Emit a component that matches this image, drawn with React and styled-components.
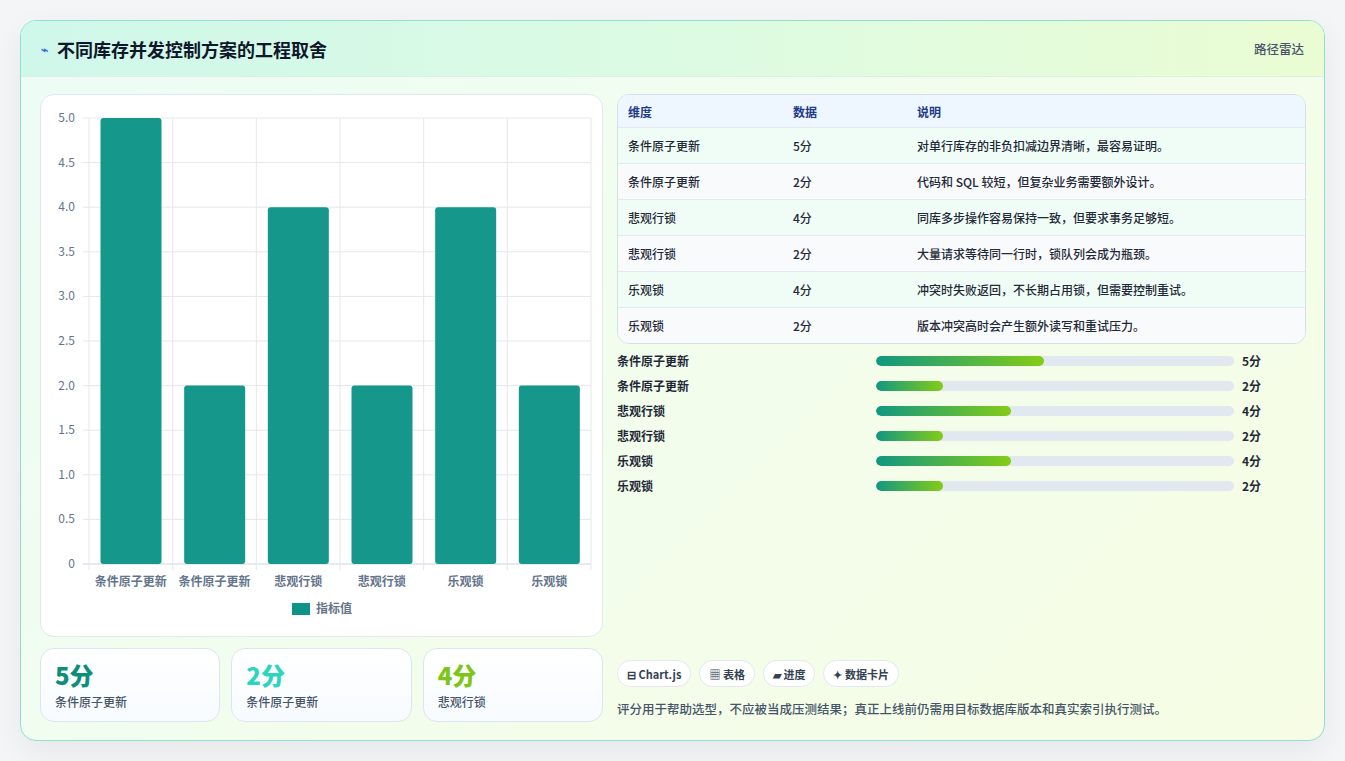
import React from "react";
import styled, { createGlobalStyle } from "styled-components";

const G = createGlobalStyle`
  body{margin:0;background:#f4f5f7;font-family:"Noto Sans CJK SC","Noto Sans",sans-serif;}
`;
const Page = styled.div`padding:20px;height:761px;box-sizing:border-box;`;
const Card = styled.div`
  width:1305px;height:721px;box-sizing:border-box;border:1px solid #8fe0cf;border-radius:16px;overflow:hidden;
  background:linear-gradient(135deg,#ecfdf7 0%,#f3fdea 60%,#f6fde4 100%);
  box-shadow:0 10px 30px rgba(0,0,0,0.06);display:flex;flex-direction:column;`;
const Header = styled.div`
  height:55px;flex:none;display:flex;align-items:center;justify-content:space-between;padding:0 20px;
  background:linear-gradient(90deg,#cff7ea 0%,#dcfbe3 50%,#eafcd3 100%);border-bottom:1px solid #dbeee6;`;
const Title = styled.h1`margin:0;font-size:18px;font-weight:700;color:#0f172a;display:flex;align-items:center;gap:9px;`;
const Spark = styled.span`color:#3b6fe0;font-size:12px;`;
const Tag = styled.span`font-size:12.5px;color:#475569;font-weight:500;`;
const Body = styled.div`flex:1;display:grid;grid-template-columns:563px 689px;gap:14px;padding:17px 19px 18px 19px;`;
const Col = styled.div`display:flex;flex-direction:column;gap:11px;`;
const ChartBox = styled.div`height:543px;background:#fff;border:1px solid #e2e8f0;border-radius:14px;box-sizing:border-box;`;
const Stats = styled.div`display:grid;grid-template-columns:repeat(3,1fr);gap:11px;`;
const Stat = styled.div`height:74px;box-sizing:border-box;border:1px solid #dbe7f0;border-radius:14px;background:linear-gradient(180deg,#fff,#f7fbff);padding:10px 14px;`;
const StatV = styled.div`font-size:24px;font-weight:800;color:${p=>p.c};line-height:32px;`;
const StatL = styled.div`font-size:12px;color:#475569;font-weight:500;margin-top:2px;`;
const Table = styled.div`border:1px solid #d5e0ea;border-radius:12px;overflow:hidden;background:#fff;`;
const Row = styled.div`display:grid;grid-template-columns:165px 124px 1fr;height:${p=>p.h}px;align-items:center;padding:0 10px;
  background:${p=>p.bg};border-top:${p=>p.first?"none":"1px solid #e3e9ef"};font-size:12px;font-weight:${p=>p.head?700:500};color:${p=>p.head?"#1e3a8a":"#1f2937"};`;
const Bars = styled.div`display:flex;flex-direction:column;gap:9px;margin-top:8px;`;
const BarRow = styled.div`display:grid;grid-template-columns:259px 358px 1fr;align-items:center;column-gap:0;height:16px;font-size:12px;font-weight:600;color:#1f2937;`;
const Track = styled.div`height:10px;border-radius:5px;background:#e2e8f0;overflow:hidden;`;
const Fill = styled.div`height:100%;border-radius:5px;background:linear-gradient(90deg,#119781,#84cc16);`;
const Val = styled.span`padding-left:8px;font-weight:700;`;
const Spacer = styled.div`flex:1;`;
const Chips = styled.div`display:flex;gap:8px;`;
const Chip = styled.span`height:27px;box-sizing:border-box;padding:0 9px;border:1px solid #e2e8f0;border-radius:14px;background:#fff;display:flex;align-items:center;gap:4px;font-size:11px;font-weight:700;color:#334155;`;
const Note = styled.p`margin:12px 0 4px;font-size:12.5px;color:#475569;font-weight:500;`;

const cats = ["条件原子更新","条件原子更新","悲观行锁","悲观行锁","乐观锁","乐观锁"];
const vals = [5,2,4,2,4,2];
const desc = ["对单行库存的非负扣减边界清晰，最容易证明。","代码和 SQL 较短，但复杂业务需要额外设计。","同库多步操作容易保持一致，但要求事务足够短。","大量请求等待同一行时，锁队列会成为瓶颈。","冲突时失败返回，不长期占用锁，但需要控制重试。","版本冲突高时会产生额外读写和重试压力。"];

function Chart(){
  const x0=48,x1=550,yt=23,yb=469,cw=(x1-x0)/6;
  const ticks=[0,0.5,1,1.5,2,2.5,3,3.5,4,4.5,5];
  return (
    <svg width="561" height="541" style={{display:"block"}} fontFamily='"Noto Sans CJK SC",sans-serif'>
      {ticks.map(t=>{const y=yb-(t/5)*(yb-yt);return <g key={t}>
        <line x1={x0-6} x2={x1} y1={y} y2={y} stroke={t===0?"#cbd5e1":"#e5e7eb"}/>
        <text x={x0-14} y={y+4} fontSize="12" fill="#64748b" textAnchor="end">{t===0?"0":t.toFixed(1)}</text></g>})}
      {Array.from({length:7}).map((_,i)=><line key={i} x1={x0+i*cw} x2={x0+i*cw} y1={yt} y2={yb+6} stroke="#e5e7eb"/>)}
      {vals.map((v,i)=>{const h=(v/5)*(yb-yt);return <rect key={i} x={x0+i*cw+11.5} y={yb-h} width={61} height={h} rx="3" fill="#0d9488" opacity="0.97"/>})}
      {cats.map((c,i)=><text key={i} x={x0+i*cw+cw/2} y={491} fontSize="12" fontWeight="600" fill="#64748b" textAnchor="middle">{c}</text>)}
      <rect x="251" y="508" width="18" height="12" fill="#0d9488"/>
      <text x="275" y="518" fontSize="12" fontWeight="600" fill="#64748b">指标值</text>
    </svg>
  );
}

export default function App(){
  return (<Page><G/><Card>
    <Header><Title><Spark>⌁</Spark>不同库存并发控制方案的工程取舍</Title><Tag>路径雷达</Tag></Header>
    <Body>
      <Col>
        <ChartBox><Chart/></ChartBox>
        <Stats>
          <Stat><StatV c="#0f8f7b">5分</StatV><StatL>条件原子更新</StatL></Stat>
          <Stat><StatV c="#2dd4bf">2分</StatV><StatL>条件原子更新</StatL></Stat>
          <Stat><StatV c="#7ec51a">4分</StatV><StatL>悲观行锁</StatL></Stat>
        </Stats>
      </Col>
      <Col style={{gap:0}}>
        <Table>
          <Row head first h={32} bg="#eef6ff"><span>维度</span><span>数据</span><span>说明</span></Row>
          {cats.map((c,i)=><Row key={i} h={35} bg={i%2===0?"#f0fdf6":"#f8fafc"}><span>{c}</span><span>{vals[i]}分</span><span>{desc[i]}</span></Row>)}
        </Table>
        <Bars>
          {cats.map((c,i)=><BarRow key={i}><span>{c}</span><Track><Fill style={{width:`${vals[i]*9.4}%`}}/></Track><Val>{vals[i]}分</Val></BarRow>)}
        </Bars>
        <Spacer/>
        <Chips>
          <Chip>⊟ Chart.js</Chip><Chip>▦ 表格</Chip><Chip>▰ 进度</Chip><Chip>✦ 数据卡片</Chip>
        </Chips>
        <Note>评分用于帮助选型，不应被当成压测结果；真正上线前仍需用目标数据库版本和真实索引执行测试。</Note>
      </Col>
    </Body>
  </Card></Page>);
}
